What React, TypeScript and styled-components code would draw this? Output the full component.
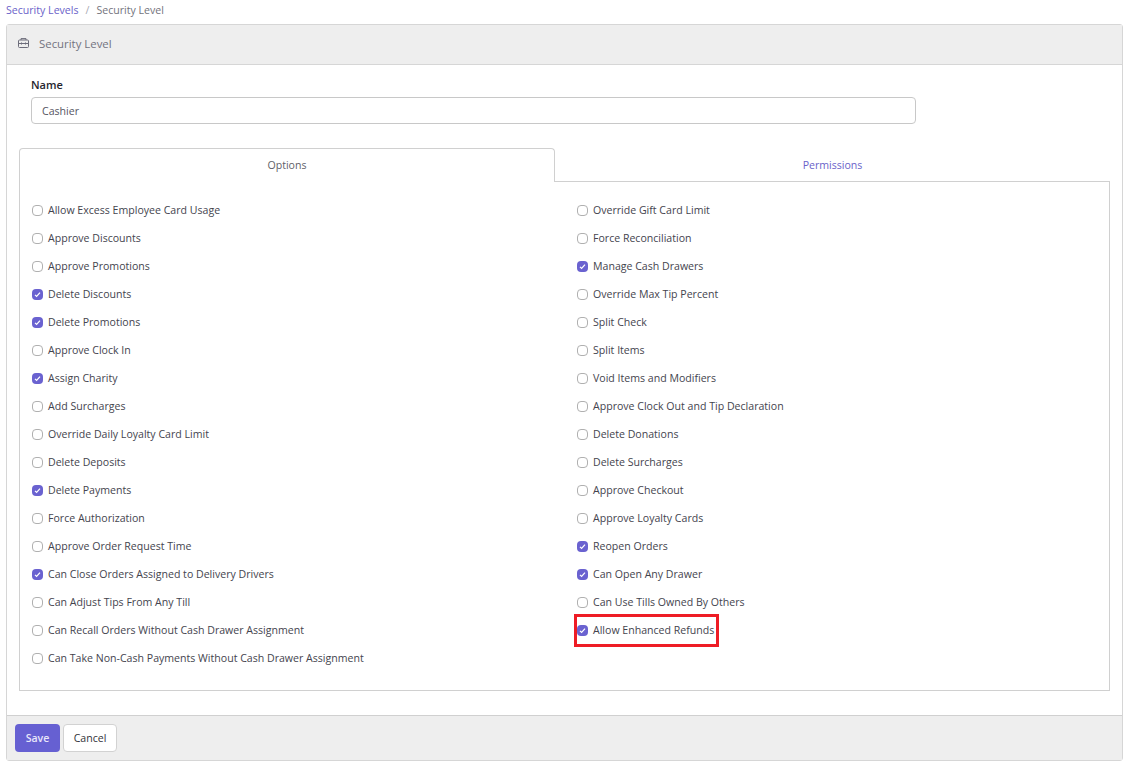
import React from 'react'
import styled, { createGlobalStyle } from 'styled-components'

const GlobalStyle = createGlobalStyle`
  html, body { margin: 0; padding: 0; background: #fff; }
  body { font-family: "Open Sans", "Noto Sans", sans-serif; font-size: 10.58px; color: #3a3a44; }
`

const leftOptions: [string, boolean][] = [
  ['Allow Excess Employee Card Usage', false],
  ['Approve Discounts', false],
  ['Approve Promotions', false],
  ['Delete Discounts', true],
  ['Delete Promotions', true],
  ['Approve Clock In', false],
  ['Assign Charity', true],
  ['Add Surcharges', false],
  ['Override Daily Loyalty Card Limit', false],
  ['Delete Deposits', false],
  ['Delete Payments', true],
  ['Force Authorization', false],
  ['Approve Order Request Time', false],
  ['Can Close Orders Assigned to Delivery Drivers', true],
  ['Can Adjust Tips From Any Till', false],
  ['Can Recall Orders Without Cash Drawer Assignment', false],
  ['Can Take Non-Cash Payments Without Cash Drawer Assignment', false],
]

const rightOptions: [string, boolean][] = [
  ['Override Gift Card Limit', false],
  ['Force Reconciliation', false],
  ['Manage Cash Drawers', true],
  ['Override Max Tip Percent', false],
  ['Split Check', false],
  ['Split Items', false],
  ['Void Items and Modifiers', false],
  ['Approve Clock Out and Tip Declaration', false],
  ['Delete Donations', false],
  ['Delete Surcharges', false],
  ['Approve Checkout', false],
  ['Approve Loyalty Cards', false],
  ['Reopen Orders', true],
  ['Can Open Any Drawer', true],
  ['Can Use Tills Owned By Others', false],
  ['Allow Enhanced Refunds', true],
]

function App() {
  return (
    <Page>
      <GlobalStyle />
      <Breadcrumb>
        <CrumbLink>Security Levels</CrumbLink>
        <CrumbSep>/</CrumbSep>
        <span>Security Level</span>
      </Breadcrumb>
      <Card>
        <CardHeader>
          <svg width="11" height="10" viewBox="0 0 11 10" fill="none" stroke="#6c6c7a" strokeWidth="1">
            <rect x="0.5" y="2" width="10" height="7.5" rx="1" />
            <path d="M3 2V0.6h5V2M0.5 5.5h10M3.5 4.5v2M7.5 4.5v2" />
          </svg>
          <CardTitle>Security Level</CardTitle>
        </CardHeader>
        <CardBody>
          <Field>
            <Label>Name</Label>
            <TextInput>Cashier</TextInput>
          </Field>
          <Tabs>
            <Tab active>Options</Tab>
            <Tab>Permissions</Tab>
          </Tabs>
          <TabPanel>
            <Column>
              {leftOptions.map(([text, checked]) => (
                <Option key={text}>
                  <Box checked={checked}>{checked && <Tick />}</Box>
                  {text}
                </Option>
              ))}
            </Column>
            <Column>
              {rightOptions.map(([text, checked]) => (
                <Option key={text}>
                  <Box checked={checked}>{checked && <Tick />}</Box>
                  {text}
                  {text === 'Allow Enhanced Refunds' && <Highlight />}
                </Option>
              ))}
            </Column>
          </TabPanel>
        </CardBody>
        <CardFooter>
          <SaveButton>Save</SaveButton>
          <CancelButton>Cancel</CancelButton>
        </CardFooter>
      </Card>
    </Page>
  )
}

function Tick() {
  return (
    <svg width="11" height="11" viewBox="0 0 11 11" fill="none" stroke="#fff" strokeWidth="1.2">
      <path d="M3 5.8l1.6 1.6 3.4-3.8" />
    </svg>
  )
}

export default App

const Page = styled.div`
  width: 1128px;
  height: 767px;
  overflow: hidden;
  padding: 0 5px 0 6px;
  box-sizing: border-box;
`

const Breadcrumb = styled.div`
  height: 24px;
  display: flex;
  align-items: center;
  padding-bottom: 4px;
  box-sizing: border-box;
  color: #73737c;
  line-height: 20px;
`

const CrumbLink = styled.span`
  color: #6a62c9;
`

const CrumbSep = styled.span`
  margin: 0 7px;
  color: #a9a9b2;
`

const Card = styled.div`
  height: 737px;
  display: flex;
  flex-direction: column;
  border: 1px solid #d6d6d6;
  border-radius: 3px;
  box-sizing: border-box;
`

const CardHeader = styled.div`
  height: 40px;
  flex: none;
  display: flex;
  align-items: center;
  padding: 0 0 2px 11px;
  background: #eeeeee;
  border-bottom: 1px solid #d6d6d6;
  box-sizing: border-box;
  svg {
    margin-top: -1px;
  }
`

const CardTitle = styled.span`
  margin-left: 10px;
  font-size: 11.4px;
  color: #73737f;
`

const CardBody = styled.div`
  flex: 1;
  padding: 12px 12px 0;
`

const Field = styled.div`
  padding: 0 12px;
  height: 71px;
`

const Label = styled.div`
  height: 20px;
  line-height: 16px;
  font-weight: 600;
  font-size: 11px;
  color: #26262e;
`

const TextInput = styled.div`
  width: 885px;
  height: 27px;
  line-height: 27px;
  padding: 0 10px;
  box-sizing: border-box;
  border: 1px solid #c8c8c8;
  border-radius: 4px;
  color: #55555f;
`

const Tabs = styled.div`
  display: grid;
  grid-template-columns: 536px 1fr;
  height: 34px;
`

const Tab = styled.div<{ active?: boolean }>`
  display: flex;
  align-items: center;
  justify-content: center;
  position: relative;
  z-index: 1;
  box-sizing: border-box;
  padding-bottom: ${props => (props.active ? '2px' : '0')};
  color: ${props => (props.active ? '#5f5f69' : '#6a62c9')};
  background: #fff;
  border: ${props => (props.active ? '1px solid #d0d0d0' : 'none')};
  border-bottom: ${props => (props.active ? 'none' : '1px solid #d0d0d0')};
  border-radius: 4px 4px 0 0;
`

const TabPanel = styled.div`
  height: 509px;
  box-sizing: border-box;
  border: 1px solid #d0d0d0;
  border-top: none;
  padding: 14px 12px 0;
  display: grid;
  grid-template-columns: 545px 1fr;
`

const Column = styled.div`
  display: flex;
  flex-direction: column;
`

const Option = styled.div`
  position: relative;
  height: 28px;
  display: flex;
  align-items: center;
  gap: 5px;
  color: #44444e;
`

const Box = styled.span<{ checked?: boolean }>`
  width: 11px;
  height: 11px;
  flex: none;
  display: flex;
  align-items: center;
  justify-content: center;
  box-sizing: border-box;
  border-radius: 4px;
  background: ${props => (props.checked ? '#6a62d0' : '#fff')};
  border: ${props => (props.checked ? 'none' : '1px solid #b0b0b0')};
`

const Highlight = styled.span`
  position: absolute;
  left: -3px;
  top: -2px;
  width: 145px;
  height: 33px;
  border: 3px solid #ee1c25;
  box-sizing: border-box;
`

const CardFooter = styled.div`
  height: 45px;
  flex: none;
  display: flex;
  align-items: center;
  gap: 3px;
  padding-left: 8px;
  background: #eeeeee;
  border-top: 1px solid #d0d0d0;
  box-sizing: border-box;
`

const SaveButton = styled.div`
  width: 45px;
  height: 28px;
  display: flex;
  align-items: center;
  justify-content: center;
  font-weight: 600;
  color: #e8e6fa;
  background: #6660d2;
  border-radius: 4px;
`

const CancelButton = styled.div`
  width: 54px;
  height: 28px;
  display: flex;
  align-items: center;
  justify-content: center;
  color: #33333a;
  background: #fff;
  border: 1px solid #d2d2d2;
  border-radius: 4px;
  box-sizing: border-box;
`
